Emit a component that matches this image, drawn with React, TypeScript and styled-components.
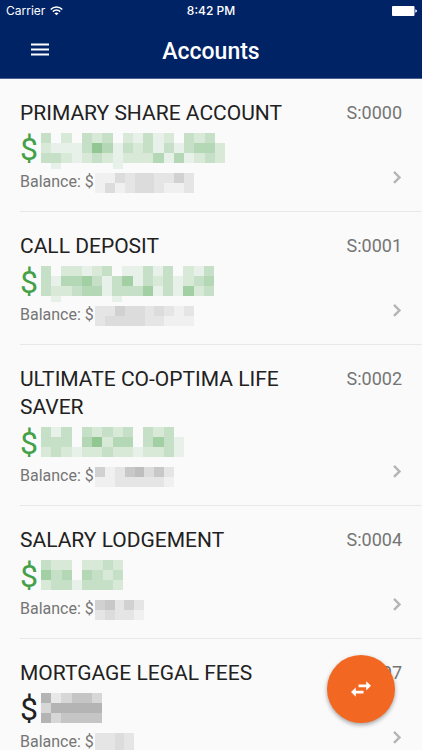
import React from "react";
import styled, { createGlobalStyle } from "styled-components";

const GlobalStyle = createGlobalStyle`
  * { box-sizing: border-box; }
  html, body { margin: 0; background: #fafafa; }
  body { font-family: Roboto, "Noto Sans", sans-serif; color: #212121; overflow: hidden; }
  button { font: inherit; padding: 0; border: 0; background: none; cursor: pointer; }
`;

const Screen = styled.div`
  height: 100vh;
  display: flex;
  flex-direction: column;
  overflow: hidden;
`;

const Header = styled.header`
  flex: none;
  background: #002366;
  color: #fff;
  border-bottom: 1px solid #4a6191;
`;

const StatusBar = styled.div`
  height: 22px;
  padding: 0 6px;
  display: grid;
  grid-template-columns: 1fr auto 1fr;
  align-items: center;
  font: 12px/22px Inter, "Liberation Sans", sans-serif;
`;

const Carrier = styled.span`
  display: flex;
  align-items: center;
  gap: 5px;
`;

const Clock = styled.span`
  font-weight: 500;
`;

const Battery = styled.svg`
  justify-self: end;
  margin-right: -2px;
`;

const TitleBar = styled.div`
  height: 56px;
  padding: 0 20px;
  display: grid;
  grid-template-columns: 40px 1fr 40px;
  align-items: center;
`;

const MenuButton = styled.button`
  width: 40px;
  height: 40px;
  display: grid;
  place-items: center;
  color: #fff;
`;

const PageTitle = styled.h1`
  margin: 0;
  padding-top: 4px;
  font-size: 23px;
  line-height: 28px;
  font-weight: 500;
  text-align: center;
`;

const AccountList = styled.ul`
  flex: 1;
  min-height: 0;
  margin: 0;
  padding: 0;
  list-style: none;
  overflow: hidden;
`;

const AccountItem = styled.li`
  margin-left: 20px;
  border-bottom: 1px solid #e8e8e8;
`;

const AccountButton = styled.button`
  width: 100%;
  padding: 20px 20px 17px 0;
  display: grid;
  grid-template-columns: 1fr auto;
  column-gap: 24px;
  text-align: left;
  color: inherit;
`;

const AccountName = styled.span`
  font-size: 21px;
  line-height: 28px;
`;

const AccountCode = styled.span`
  font-size: 18px;
  line-height: 28px;
  color: #757575;
`;

const Available = styled.span<{ $positive: boolean }>`
  height: 42px;
  margin-top: 1px;
  display: flex;
  align-items: center;
  grid-column: 1 / -1;
  gap: 3px;
  font-size: 32px;
  line-height: 42px;
  color: ${(p) => (p.$positive ? "#43a047" : "#212121")};
`;

const Balance = styled.span`
  height: 24px;
  display: flex;
  align-items: center;
  gap: 1px;
  font-size: 16px;
  line-height: 24px;
  color: #757575;
`;

const Chevron = styled.svg`
  justify-self: end;
`;

const Mosaic = styled.svg`
  flex: none;
  display: block;
  overflow: visible;
`;

const AmountMosaic = styled(Mosaic)`
  margin-bottom: 2px;
`;

const BalanceMosaic = styled(Mosaic)`
  margin-top: 2px;
`;

const TransferButton = styled.button`
  position: fixed;
  right: 27px;
  bottom: 27px;
  width: 68px;
  height: 68px;
  display: grid;
  place-items: center;
  border-radius: 50%;
  background: #f26722;
  color: #fff;
  box-shadow: 0 2px 4px rgba(0, 0, 0, 0.35);
`;

/* Each digit is the shade of one block, from 0 (clear) to 9 (strongest). */
function RedactedAmount({ rows, color }: { rows: string[]; color: string }) {
  const columns = rows[0].length;
  return (
    <AmountMosaic
      width={Math.round(columns * 10.2)}
      height={30}
      viewBox={`0 0 ${columns} 3`}
      preserveAspectRatio="none"
      aria-hidden="true"
      shapeRendering="crispEdges"
    >
      {rows.map((row, y) =>
        row.split("").map((d, x) =>
          d === "0" ? null : (
            <rect
              key={`${x}-${y}`}
              x={x}
              y={y}
              width={1}
              height={y === 3 ? 0.6 : 1}
              fill={color}
              fillOpacity={Number(d) * 0.095}
            />
          ),
        ),
      )}
    </AmountMosaic>
  );
}

function RedactedBalance({ rows }: { rows: string[] }) {
  const columns = rows[0].length;
  return (
    <BalanceMosaic
      width={columns * 10 - 1}
      height={20}
      viewBox={`0 0 ${columns} 2`}
      preserveAspectRatio="none"
      aria-hidden="true"
      shapeRendering="crispEdges"
    >
      {rows.map((row, y) =>
        row.split("").map((d, x) => (
          <rect key={`${x}-${y}`} x={x} y={y} width={1} height={1} fill="#757575" fillOpacity={Number(d) * 0.075} />
        )),
      )}
    </BalanceMosaic>
  );
}

interface Account {
  name: string;
  code: string;
  positive: boolean;
  available: string[];
  balance: string[];
}

const accounts: Account[] = [
  {
    name: "PRIMARY SHARE ACCOUNT",
    code: "S:0000",
    positive: true,
    available: ["302032302131203230", "211136413231313442", "332123212224141232", "010000010000000000"],
    balance: ["1132332242", "1312332112"],
  },
  {
    name: "CALL DEPOSIT",
    code: "S:0001",
    positive: true,
    available: ["30221230113130213", "31445313513231234", "32234413335131523", "01000001000000000"],
    balance: ["2243323212", "2333322111"],
  },
  {
    name: "ULTIMATE CO-OPTIMA LIFE SAVER",
    code: "S:0002",
    positive: true,
    available: ["31303232303230", "33304624403531", "23212232212231"],
    balance: ["41256352", "11222221"],
  },
  {
    name: "SALARY LODGEMENT",
    code: "S:0004",
    positive: true,
    available: ["32202232", "53404323", "23313332"],
    balance: ["45242", "23221"],
  },
  {
    name: "MORTGAGE LEGAL FEES",
    code: "S:0007",
    positive: false,
    available: ["412332", "244444", "423333"],
    balance: ["2232", "2232"],
  },
];

function AccountRow({ account }: { account: Account }) {
  return (
    <AccountItem>
      <AccountButton type="button">
        <AccountName>{account.name}</AccountName>
        <AccountCode>{account.code}</AccountCode>
        <Available $positive={account.positive}>
          $<RedactedAmount rows={account.available} color={account.positive ? "#43a047" : "#424242"} />
        </Available>
        <Balance>
          Balance: $<RedactedBalance rows={account.balance} />
        </Balance>
        <Chevron width="10" height="14" viewBox="0 0 10 14" fill="none" aria-hidden="true">
          <path d="M2 1.9 L7.5 7.4 L2 12.9" stroke="#b5b5b5" strokeWidth="2.4" />
        </Chevron>
      </AccountButton>
    </AccountItem>
  );
}

export default function App() {
  return (
    <Screen>
      <GlobalStyle />
      <Header>
        <StatusBar>
          <Carrier>
            Carrier
            <svg width="13" height="10" viewBox="0 0 13 10" fill="none" stroke="#fff" aria-hidden="true">
              <path d="M0.7 3.5 C4 0.2 9 0.2 12.3 3.5" strokeWidth="1.6" />
              <path d="M2.8 5.7 C5 3.7 8 3.7 10.2 5.7" strokeWidth="1.6" />
              <path d="M4.4 7.2 C5.7 6.2 7.3 6.2 8.6 7.2 L6.5 9.3 Z" fill="#fff" stroke="none" />
            </svg>
          </Carrier>
          <Clock>8:42 PM</Clock>
          <Battery width="26" height="10" viewBox="0 0 26 10" fill="#fff" aria-hidden="true">
            <rect x="0" y="0" width="22.5" height="10" rx="1" />
            <path d="M23.3 3.2 Q25 3.8 25 5 Q25 6.2 23.3 6.8 Z" />
          </Battery>
        </StatusBar>
        <TitleBar>
          <MenuButton type="button" aria-label="Menu">
            <svg width="18" height="14" viewBox="0 0 18 14" fill="#fff" aria-hidden="true">
              <path d="M0 0.4h18v2H0zM0 5.4h18v2H0zM0 10.6h18v2H0z" />
            </svg>
          </MenuButton>
          <PageTitle>Accounts</PageTitle>
        </TitleBar>
      </Header>
      <AccountList>
        {accounts.map((account) => (
          <AccountRow key={account.code} account={account} />
        ))}
      </AccountList>
      <TransferButton type="button" aria-label="Transfer funds">
        <svg width="20" height="16" viewBox="0 0 20 16" fill="#fff" aria-hidden="true">
          <path d="M7.5 3.4h7.7V0.2L20 4.8l-4.8 4.6V6.2H7.5zM12.5 9.7H4.8V6.5L0 11.1l4.8 4.6v-3.2h7.7z" />
        </svg>
      </TransferButton>
    </Screen>
  );
}
